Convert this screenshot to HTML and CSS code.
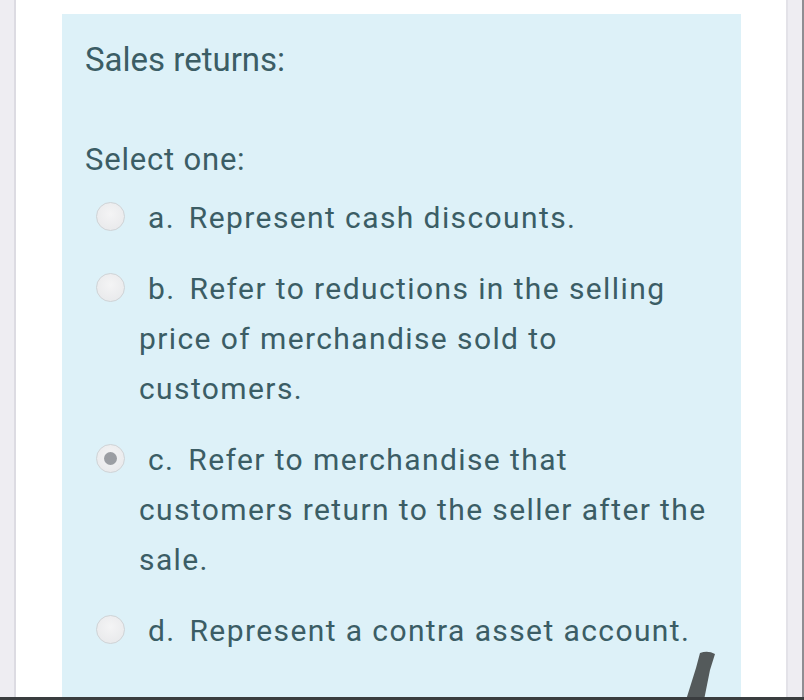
FILE: index.html
```html
<!DOCTYPE html>
<html>
<head>
<meta charset="utf-8">
<link rel="stylesheet" href="styles.css">
</head>
<body>
<div class="screen">
  <div class="edge edge-left"></div>
  <div class="card">
    <div class="que">
      <div class="qtext">Sales returns:</div>
      <div class="prompt">Select one:</div>
      <div class="answers">
        <div class="option">
          <span class="radio"></span>
          <div class="label"><span class="num">a.</span> Represent cash discounts.</div>
        </div>
        <div class="option">
          <span class="radio"></span>
          <div class="label"><span class="num">b.</span> Refer to reductions in the selling price of merchandise sold to customers.</div>
        </div>
        <div class="option">
          <span class="radio checked"></span>
          <div class="label"><span class="num">c.</span> Refer to merchandise that customers return to the seller after the sale.</div>
        </div>
        <div class="option">
          <span class="radio"></span>
          <div class="label"><span class="num">d.</span> Represent a contra asset account.</div>
        </div>
      </div>
    </div>
  </div>
  <div class="edge edge-right"></div>
  <svg class="mark" width="60" height="50" viewBox="0 0 60 50"><path d="M30 3 Q38 0 45 4 L40 20 L34 50 L16 50 L26 18 Z" fill="#545a5b"/></svg>
  <div class="bottom-bar"></div>
</div>
</body>
</html>
```
FILE: styles.css
```css
html, body {
  margin: 0;
  padding: 0;
}
body {
  width: 804px;
  height: 700px;
  overflow: hidden;
  font-family: Roboto, "Liberation Sans", sans-serif;
  background: #ffffff;
}
.screen {
  position: relative;
  display: flex;
  width: 804px;
  height: 700px;
}
.edge {
  flex: none;
  background: #eeedf2;
}
.edge-left {
  width: 14px;
  border-right: 2px solid #dcdbe2;
}
.edge-right {
  width: 14px;
  border-left: 2px solid #e3e2e8;
  border-right: 2px solid #8e8e93;
}
.card {
  flex: 1;
  padding: 14px 45px 0 46px;
  background: #ffffff;
}
.que {
  height: 100%;
  background: #ddf1f8;
  padding: 26px 20px 0 23px;
  color: #3b5d65;
  box-sizing: border-box;
}
.qtext {
  font-size: 33px;
  line-height: 40px;
}
.prompt {
  font-size: 31px;
  letter-spacing: 0.8px;
  line-height: 40px;
  margin-top: 60px;
}
.answers {
  margin-top: 13px;
  display: flex;
  flex-direction: column;
  gap: 21px;
}
.option {
  display: flex;
  align-items: flex-start;
  gap: 14px;
  padding-left: 11px;
}
.radio {
  flex: none;
  width: 27px;
  height: 27px;
  margin-top: 9px;
  border-radius: 50%;
  border: 1px solid #cfd3d6;
  background: radial-gradient(circle at 50% 40%, #f4f4f5 0%, #e6e7e9 100%);
  position: relative;
}
.radio.checked::after {
  content: "";
  position: absolute;
  left: 7px;
  top: 7px;
  width: 13px;
  height: 13px;
  border-radius: 50%;
  background: #9b9ea3;
}
.label {
  flex: 1;
  font-size: 30px;
  letter-spacing: 1.4px;
  line-height: 50px;
}
.num {
  padding-left: 9px;
  margin-right: 5px;
}
.mark {
  position: absolute;
  left: 670px;
  top: 650px;
}
.bottom-bar {
  position: absolute;
  left: 0;
  right: 0;
  bottom: 0;
  height: 3px;
  background: #3a3d3f;
}
```
